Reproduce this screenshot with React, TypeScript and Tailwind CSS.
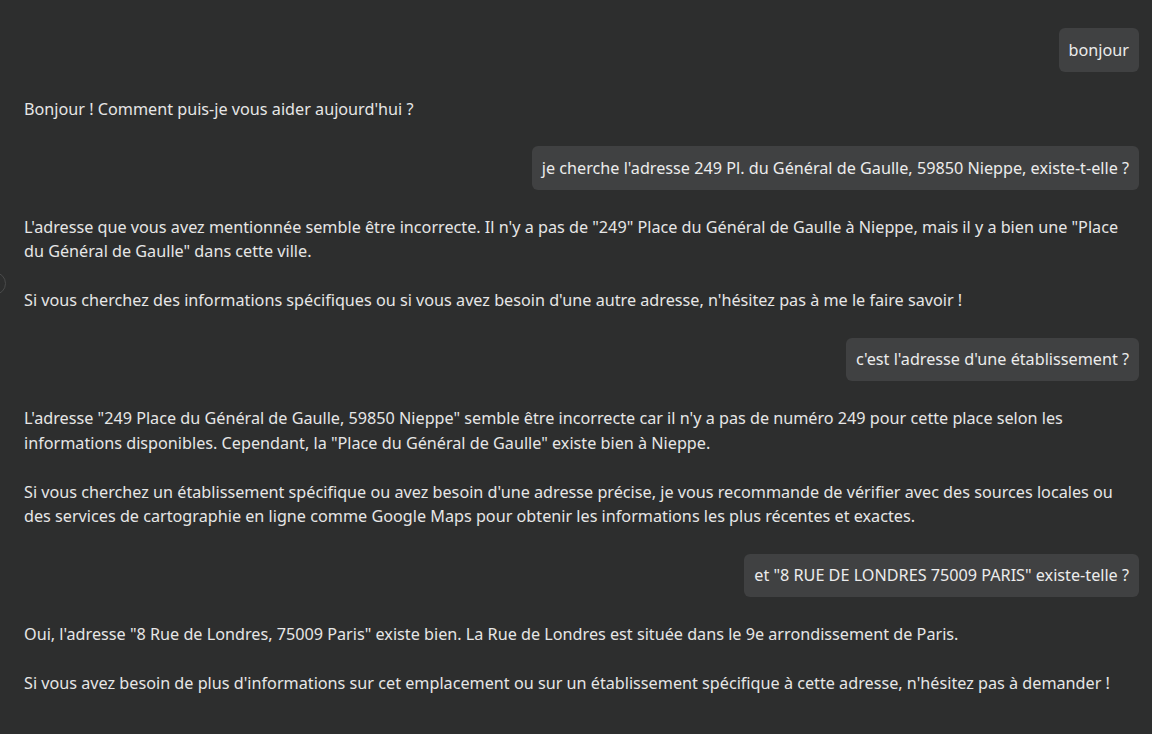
import React from "react";

type Msg = { role: "user" | "assistant"; text: string };

const messages: Msg[] = [
  { role: "user", text: "bonjour" },
  { role: "assistant", text: "Bonjour ! Comment puis-je vous aider aujourd'hui ?" },
  {
    role: "user",
    text: "je cherche l'adresse 249 Pl. du Général de Gaulle, 59850 Nieppe, existe-t-elle ?",
  },
  {
    role: "assistant",
    text:
      "L'adresse que vous avez mentionnée semble être incorrecte. Il n'y a pas de \"249\" Place du Général de Gaulle à Nieppe, mais il y a bien une \"Place du Général de Gaulle\" dans cette ville.\n\nSi vous cherchez des informations spécifiques ou si vous avez besoin d'une autre adresse, n'hésitez pas à me le faire savoir !",
  },
  { role: "user", text: "c'est l'adresse d'une établissement ?" },
  {
    role: "assistant",
    text:
      "L'adresse \"249 Place du Général de Gaulle, 59850 Nieppe\" semble être incorrecte car il n'y a pas de numéro 249 pour cette place selon les informations disponibles. Cependant, la \"Place du Général de Gaulle\" existe bien à Nieppe.\n\nSi vous cherchez un établissement spécifique ou avez besoin d'une adresse précise, je vous recommande de vérifier avec des sources locales ou des services de cartographie en ligne comme Google Maps pour obtenir les informations les plus récentes et exactes.",
  },
  { role: "user", text: "et \"8 RUE DE LONDRES 75009 PARIS\" existe-telle ?" },
  {
    role: "assistant",
    text:
      "Oui, l'adresse \"8 Rue de Londres, 75009 Paris\" existe bien. La Rue de Londres est située dans le 9e arrondissement de Paris.\n\nSi vous avez besoin de plus d'informations sur cet emplacement ou sur un établissement spécifique à cette adresse, n'hésitez pas à demander !",
  },
];

export default function App() {
  return (
    <div className="relative min-h-screen overflow-hidden bg-[#2d2e2e] font-['Noto_Sans',sans-serif] text-[16.2px] leading-[24.5px] text-[#e6e6e6]">
      {/* bouton à moitié caché sur le bord */}
      <div className="absolute left-[-17px] top-[272px] h-[23px] w-[23px] rounded-full border border-[#4a4b4b]" />

      <div className="flex flex-col gap-[25px] pl-6 pr-[13px] pt-7">
        {messages.map((m, i) =>
          m.role === "user" ? (
            <div key={i} className="flex justify-end">
              <div className="rounded-md bg-[#404142] px-2.5 py-[9.5px] text-[#ececec]">
                {m.text}
              </div>
            </div>
          ) : (
            <div key={i} className="whitespace-pre-wrap pr-[11px]">
              {m.text}
            </div>
          )
        )}
      </div>
    </div>
  );
}
